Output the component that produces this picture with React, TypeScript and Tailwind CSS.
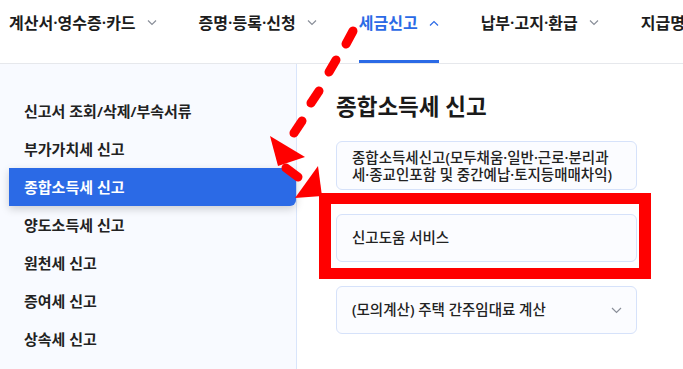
import React from "react";

// Latin first so that "·", "/", "(" and spaces stay narrow; Hangul falls through to the CJK face
const font = { fontFamily: '"Noto Sans", "Noto Sans CJK KR", sans-serif' };

const Chevron = ({ up = false }: { up?: boolean }) => (
    <svg width="10" height="6" viewBox="0 0 10 6" className="ml-[11px]" fill="none">
        <path
            d={up ? "M1 5.5L5 1.5L9 5.5" : "M1 0.5L5 4.5L9 0.5"}
            stroke={up ? "#2b6ae6" : "#8a8f99"}
            strokeWidth="1.2"
        />
    </svg>
);

const navItems = [
    { label: "계산서·영수증·카드" },
    { label: "증명·등록·신청" },
    { label: "세금신고", active: true },
    { label: "납부·고지·환급" },
    { label: "지급명세·자료제출" },
];

const sideItems = [
    "신고서 조회/삭제/부속서류",
    "부가가치세 신고",
    "종합소득세 신고",
    "양도소득세 신고",
    "원천세 신고",
    "증여세 신고",
    "상속세 신고",
];

export default function App() {
    return (
        <div className="relative w-[683px] h-[369px] overflow-hidden bg-white" style={font}>
            {/* top nav */}
            <div className="h-[64px] border-b border-[#e6e8ec] flex flex-row gap-[42px] pl-[9px] whitespace-nowrap">
                {navItems.map((item) => (
                    <div
                        key={item.label}
                        className={
                            "h-full flex flex-row items-start pt-[12px] border-b-[3px] " +
                            (item.active ? "border-[#2b6ae6]" : "border-transparent")
                        }
                    >
                        <div className="flex flex-row items-center h-[22px]">
                            <span
                                className={
                                    "text-[16px] font-semibold " +
                                    (item.active ? "text-[#2b6ae6]" : "text-[#1c1c1c]")
                                }
                            >
                                {item.label}
                            </span>
                            <Chevron up={item.active} />
                        </div>
                    </div>
                ))}
            </div>

            <div className="flex flex-row h-[305px]">
                {/* side menu */}
                <div className="w-[297px] h-full bg-[#f8faff] border-r border-[#d9e5fb] pt-[28px] pl-[9px]">
                    {sideItems.map((s) => {
                        const active = s === "종합소득세 신고";
                        return (
                            <div
                                key={s}
                                className={
                                    "h-[38px] flex items-center pl-[15px] text-[15px] font-semibold " +
                                    (active
                                        ? "bg-[#2b6ae6] text-white font-bold rounded-r-[6px] shadow-[0_3px_8px_rgba(0,0,0,0.18)]"
                                        : "text-[#222]")
                                }
                            >
                                {s}
                            </div>
                        );
                    })}
                </div>

                {/* content */}
                <div className="flex-1 pl-[39px] pt-[28px]">
                    <h1 className="text-[22.5px] leading-[30px] font-bold text-[#1a1a1a]">종합소득세 신고</h1>
                    <div className="mt-[19px] flex flex-col gap-[24px] w-[301px]">
                        <div className="h-[49px] rounded-[6px] border border-[#d6e2fa] bg-[#fbfcff] px-[15px] flex items-center">
                            <p className="text-[14.5px] leading-[17px] font-medium text-[#222] whitespace-nowrap">
                                종합소득세신고(모두채움·일반·근로·분리과
                                <br />
                                세·종교인포함 및 중간예납·토지등매매차익)
                            </p>
                        </div>
                        <div className="h-[48px] rounded-[6px] border border-[#d6e2fa] bg-[#fbfcff] px-[15px] flex items-center">
                            <p className="text-[14.5px] font-medium text-[#222]">신고도움 서비스</p>
                        </div>
                        <div className="h-[48px] rounded-[6px] border border-[#d6e2fa] bg-[#fbfcff] pl-[15px] pr-[14px] flex items-center justify-between">
                            <p className="text-[14.5px] font-medium text-[#222]">(모의계산) 주택 간주임대료 계산</p>
                            <svg width="11" height="7" viewBox="0 0 11 7" fill="none">
                                <path d="M1 1L5.5 5.5L10 1" stroke="#8a8f99" strokeWidth="1.2" />
                            </svg>
                        </div>
                    </div>
                </div>
            </div>

            {/* red annotation overlay */}
            <svg className="absolute inset-0 pointer-events-none" width="683" height="369" viewBox="0 0 683 369">
                <path d="M319 193H651V279H319Z M331 204H639V268H331Z" fill="#ff0000" fillRule="evenodd" />
                <g stroke="#ff0000" strokeWidth="9" strokeLinecap="round">
                    <line x1="353" y1="31" x2="346" y2="44" />
                    <line x1="336" y1="60" x2="329" y2="72" />
                    <line x1="319" y1="91" x2="311" y2="103" />
                    <line x1="302" y1="121" x2="294" y2="133" />
                    <line x1="286" y1="168" x2="298" y2="177" />
                </g>
                <polygon points="270,136 305,157 278,166" fill="#ff0000" />
                <polygon points="318,166 295,198 322,196" fill="#ff0000" />
            </svg>
        </div>
    );
}
